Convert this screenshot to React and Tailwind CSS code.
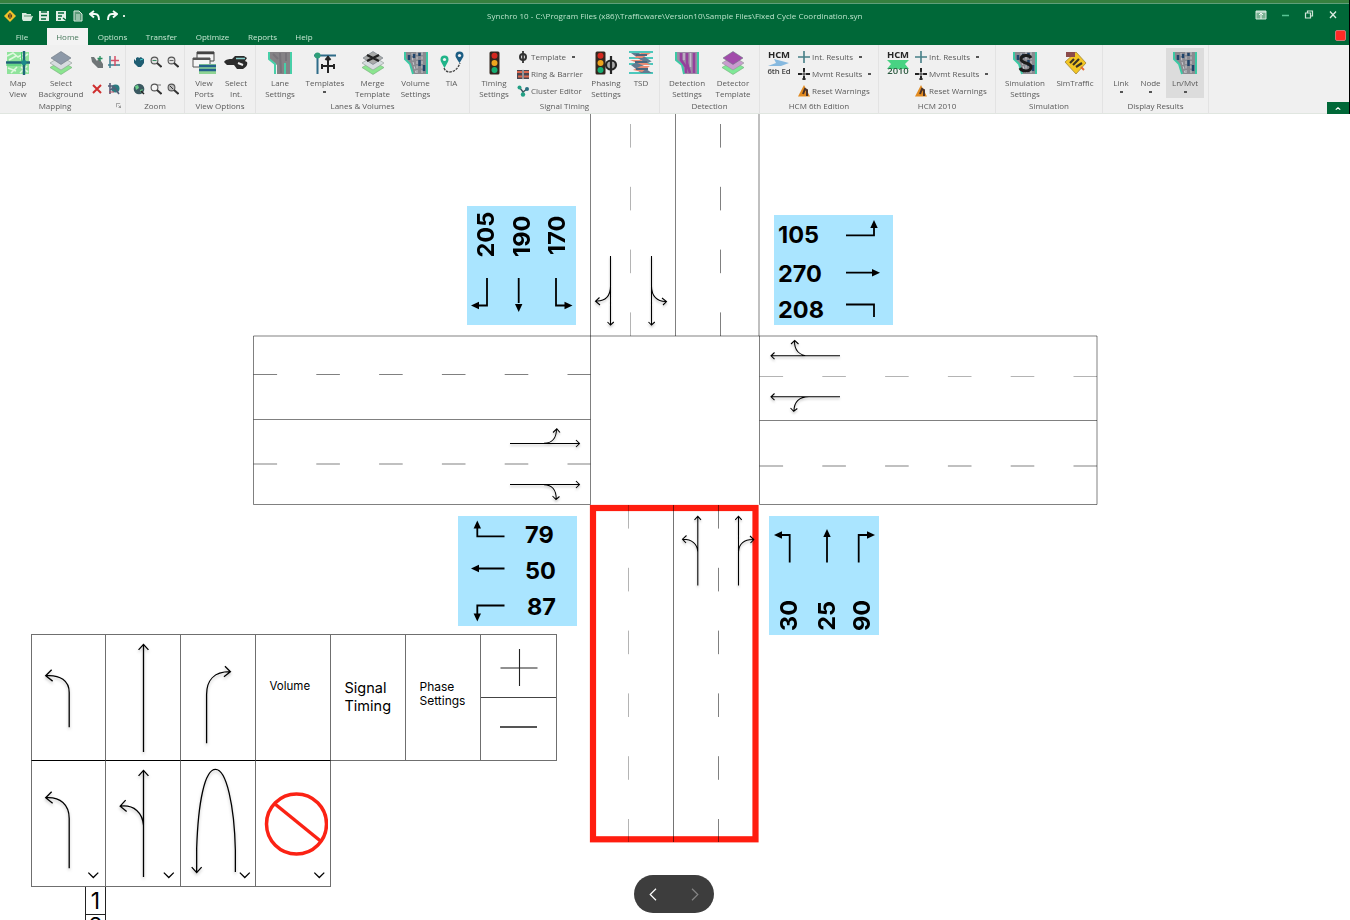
import React from "react";

/* ---------- ribbon icons ---------- */
const Svg = ({ children, box = "0 0 24 24", className = "h-6 w-6" }) => (
  <svg viewBox={box} className={className} fill="none">
    {children}
  </svg>
);

const LanesIcon = ({ a = "#8a8a90", b = "#20456b", children }) => (
  <Svg>
    <path d="M1 1h22v22H9L6 13 1 8z" fill={a} />
    <path d="M1 1v7l5 5 3 10M23 1v22" stroke="#3cc9a4" strokeWidth="2" />
    <path d="M8 2l1 9 3 11M13 1v21M18 1v21" stroke="#c9c9cf" strokeWidth="1" strokeDasharray="3 1.5" />
    <path d="M5 4v5M15.500 9v6M20 14v6M15.500 2v3M10 3v4" stroke={b} strokeWidth="2.500" />
    {children}
  </Svg>
);
const MapIcon = () => (
  <Svg>
    <rect x="1" y="1" width="22" height="22" fill="#8fe39b" />
    <path d="M1 5l6-3 5 4 7-4M3 9l7-4M14 8l8-5M2 17l8 3M5 22l6-6M15 16l7 5M14 22l7-7" stroke="#dff8df" strokeWidth="1.600" />
    <path d="M0 11.500h24M18 0v24" stroke="#1f6678" strokeWidth="2.400" />
    <path d="M0 14h15M15.500 1v9" stroke="#3cc96f" strokeWidth="1" />
    <circle cx="18" cy="11.500" r="2.600" fill="#1b8a8a" />
  </Svg>
);
const LayersIcon = ({ top = "#8d99a8", mid = "#d7dcdf", bottom = "#8be58f", mark = null }) => (
  <Svg>
    <path d="M12 10l11 6.500L12 23.500 1 16.500z" fill={bottom} stroke="#73ab79" strokeWidth=".6" />
    <path d="M12 5l11 7-11 7-11-7z" fill={mid} stroke="#8e9a93" strokeWidth=".6" />
    <path d="M12 0.500l10 6.500-10 6.500L2 7z" fill={top} stroke="#6d7782" strokeWidth=".6" />
    {mark}
  </Svg>
);
const PortsIcon = () => (
  <Svg>
    <path d="M5 1h17v9H5z" fill="#f5f5f5" stroke="#444" />
    <path d="M5 2h17" stroke="#444" strokeWidth="2.500" />
    <path d="M1 7h17v9H1z" fill="#f5f5f5" stroke="#555" />
    <path d="M1 8h17" stroke="#555" strokeWidth="2" />
    <path d="M7 13h17v10H7z" fill="#8fd494" />
    <path d="M7 15h17M7 19h17" stroke="#24608c" strokeWidth="2.400" />
  </Svg>
);
const SelectIntIcon = () => (
  <Svg>
    <path d="M0 11c2-3 5-3 8-3l3-3h9l3 2-2 3 2 1c1 3-1 5-4 7l-6 0-3-4H3z" fill="#2c2c2c" />
    <path d="M12 7.500h9" stroke="#8ad1cf" strokeWidth="1.500" />
    <path d="M14 12l5 2" stroke="#eee" strokeWidth="2" />
  </Svg>
);
const LaneSettingsIcon = () => (
  <Svg>
    <path d="M1 1h22v22H9V14L1 8z" fill="#858286" />
    <path d="M1 1v7l6 5v10M23 1v22M17 12v11" stroke="#48cfa8" strokeWidth="2" />
    <path d="M5 3l5 5M12 2l1 20M18 2v8" stroke="#77747a" strokeWidth="2" />
  </Svg>
);
const TemplatesIcon = () => (
  <Svg>
    <path d="M1 4.500h22M4.500 3v20" stroke="#2f6c89" strokeWidth="2" />
    <circle cx="4.500" cy="4.500" r="3" fill="#2e9e78" />
    <path d="M15 5v17M9 15h12M12.500 9L15 6l2.500 3M9 18v-5M21 18v-5" stroke="#252525" strokeWidth="2" />
  </Svg>
);
const TiaIcon = () => (
  <Svg>
    <path d="M4 17c2 6 12 6 16-5" stroke="#414141" strokeWidth="1.300" strokeDasharray="2.500 1" />
    <path d="M4.500 17C1 11 0.500 10 0.500 8.500a4 4 0 018 0C8.500 10 8 11 4.500 17z" fill="#20b489" />
    <path d="M19.500 12c-3.500-5.500-4-6-4-7.500a4 4 0 018 0c0 1.500-.5 2-4 7.500z" fill="#1c5d83" />
    <circle cx="4.500" cy="8.500" r="1.600" fill="#f1f1f1" />
    <circle cx="19.500" cy="4.500" r="1.600" fill="#f1f1f1" />
  </Svg>
);
const Signal = () => (
  <>
    <rect x="7.500" y=".5" width="10" height="23" rx="1.500" fill="#33261f" />
    <circle cx="12.500" cy="4.800" r="3" fill="#d5281f" />
    <circle cx="12.500" cy="12" r="3" fill="#f0a51e" />
    <circle cx="12.500" cy="19" r="3" fill="#17ad72" />
  </>
);
const TimingIcon = () => <Svg><Signal /></Svg>;
const PhasingIcon = () => (
  <Svg>
    <g transform="translate(-6 0)"><Signal /></g>
    <ellipse cx="17" cy="14" rx="5" ry="4.500" stroke="#252525" strokeWidth="2.200" fill="#aaa" />
    <path d="M17 5v18" stroke="#252525" strokeWidth="2.200" />
  </Svg>
);
const TsdIcon = () => (
  <Svg>
    <path d="M0 1h24M0 7h24M0 13h24M0 22h24" stroke="#4cc8bc" strokeWidth="2" />
    <path d="M2 2h8l12 8H13zM2 14l9-4h12l-10 5zM2 14h9l12 8H12z" fill="#607b91" />
    <path d="M12 2h10l-9 5H5zM1 9h11l10 5h-9zM4 19l8-4h9l-8 6z" fill="#ea8b73" />
    <path d="M7 4h11M6 11h12M7 18h12" stroke="#49677d" strokeWidth="2" />
  </Svg>
);
const DetectionIcon = () => (
  <Svg>
    <path d="M1 1h22v22H9L7 14 1 9z" fill="#9b8ba5" />
    <path d="M1 1v8l6 5 2 9M23 1v22" stroke="#3cc9a4" strokeWidth="2" />
    <path d="M6 2v7l5 7v6M12 2v10l3 10M19 2v20" stroke="#96409c" strokeWidth="2.600" />
    <path d="M9 2v7M15.500 2v14" stroke="#c6b9cc" strokeWidth="1.500" />
  </Svg>
);
const Hcm = ({ lower, green }) => (
  <div className="relative flex h-6 w-6 flex-col items-center justify-between text-[9.5px] leading-[8px] font-bold tracking-[-0.1px] text-[#262626]">
    <svg viewBox="0 0 24 24" className="absolute inset-0 h-6 w-6" fill="none">
      {green ? (
        <path d="M1 9h22l-4 4 4 5H1l4-5z" fill="#48d383" />
      ) : (
        <path d="M7 8l15 4-8 3H1l8-3z" fill="#86b9df" />
      )}
    </svg>
    <span className="relative">HCM</span>
    <span className={green ? "relative font-semibold text-[#2c5a40]" : "relative text-[7.8px] font-semibold text-[#444]"}>{lower}</span>
  </div>
);
const SimTrafficIcon = () => (
  <Svg>
    <path d="M13 1l10 11-10 11L2 11z" fill="#f3c623" stroke="#a08538" strokeWidth=".8" />
    <path d="M3 1h9v5H3z" fill="#8b4b4b" />
    <path d="M7 12l4-4M10 14l6-6M13 16l6-4" stroke="#3b3525" strokeWidth="2.200" />
    <path d="M18 16l3 3" stroke="#e46c35" strokeWidth="2" />
  </Svg>
);

const S = ({ children, className = "h-3 w-3" }) => <svg viewBox="0 0 12 12" className={className} fill="none">{children}</svg>;
const AddLink = () => (
  <S><path d="M0 1h3l3 4 2-3 4 6v4H7L1 6z" fill="#6f7577" /><path d="M9 0v5M6.500 2.500h5" stroke="#28905f" strokeWidth="1.300" /></S>
);
const AddNode = () => (
  <S><path d="M2 0v12M0 9h12" stroke="#3b7f90" strokeWidth="1.500" /><path d="M7 0v10M3 4.500h8" stroke="#d55068" strokeWidth="1.500" /></S>
);
const Delete = () => <S><path d="M2 2l8 8M10 2l-8 8" stroke="#cf2f2f" strokeWidth="2" /></S>;
const NodeGlobe = () => (
  <S><circle cx="7.500" cy="5.500" r="4" fill="#2b7b80" /><path d="M0 3h5M2 0v11M3 7l3-3 5 7" stroke="#555e78" strokeWidth="1.600" /><path d="M1 9h5" stroke="#b74c62" /></S>
);
const Hand = () => <S><path d="M1 3l2 2V2l2-1 1 1 2-1 1 1 2 1v4l-3 4H5L1 7z" fill="#1f5d72" /><path d="M7 4l3-1" stroke="#4cc" /></S>;
const Mag = ({ children, fill = "#e1e1e1" }) => (
  <S><circle cx="4.500" cy="4.500" r="3.400" fill={fill} stroke="#555" strokeWidth="1.100" /><path d="M7 7l4.500 4" stroke="#333" strokeWidth="2" />{children}</S>
);
const Globe = () => <S><circle cx="6" cy="6" r="5.300" fill="#3b5961" /><path d="M2 3l3-1 1 3-3 2zM7 7l3-1-2 4z" fill="#6ccf8b" /><path d="M8 8l3 3" stroke="#222" strokeWidth="1.500" /></S>;
const Phase = () => <S><circle cx="6" cy="6" r="3" stroke="#333" strokeWidth="2" /><path d="M6 0v12" stroke="#333" strokeWidth="1.800" /></S>;
const Ring = () => (
  <S><path d="M0 2h12v9H0z" fill="#4a4650" /><path d="M0 4h5M7 4h5M1 8.500h4M7 8.500h5" stroke="#db684f" strokeWidth="2.200" /><path d="M6 1v11" stroke="#ddd" /></S>
);
const Cluster = () => (
  <S><path d="M3 3l3 4 4-3M6 7v3" stroke="#3a5860" strokeWidth="1.400" /><circle cx="2.500" cy="2.500" r="2" fill="#22a084" /><circle cx="10" cy="4" r="2" fill="#2a6f80" /><circle cx="6" cy="9.500" r="2.200" fill="#22a084" /></S>
);
const IntRes = () => <S><path d="M6 0v12M0 6h12" stroke="#467f87" strokeWidth="1.600" /></S>;
const Mvmt = () => <S><path d="M6 0v4M6 8v4M0 6h4M8 6h4" stroke="#222" strokeWidth="2" /><path d="M6 3v6M3 6h6" stroke="#333" strokeWidth="1" /><path d="M4 11h4" stroke="#333" strokeWidth="1.200" /></S>;
const Warn = () => <S><path d="M6 0l6 11.500H0z" fill="#e28b20" /><path d="M5 9l2-5 2 1v6" stroke="#4c3328" strokeWidth="2" /></S>;

/* ---------- ribbon layout ---------- */
const Big = ({ w, icon, lines, caret, active }) => (
  <div className={`${w} flex shrink-0 flex-col items-center pt-[3px] ${active ? "h-[50px] bg-[#dcdcdc]" : "h-[50px]"}`}>
    <div className="flex h-6 w-6 items-center justify-center">{icon}</div>
    <div className="mt-[3px] flex flex-col items-center text-[8px] leading-[10.5px] whitespace-nowrap">
      {lines.map((l) => (
        <span key={l}>{l}</span>
      ))}
      {caret && <span className="mt-[2px] h-[2px] w-[3px] bg-[#555]" />}
    </div>
  </div>
);
const Row = ({ icon, text, caret }) => (
  <div className="flex h-[17px] items-center gap-[2px] text-[8px] leading-[10px] whitespace-nowrap">
    {icon}
    <span>{text}</span>
    {caret && <span className="ml-[4px] h-[2px] w-[3px] bg-[#555]" />}
  </div>
);
const Group = ({ w, label, pad = "", labelShift = "", children, launcher }) => (
  <div className={`${w} relative flex h-[69px] shrink-0 flex-col border-r border-[#e3e3e3] pt-[3px]`}>
    <div className={`flex h-[50px] ${pad}`}>{children}</div>
    <div className={`flex h-[16px] items-center justify-center text-[8px] leading-[10px] ${labelShift}`}>{label}</div>
    {launcher && (
      <svg viewBox="0 0 6 6" className="absolute right-[4px] bottom-[6px] h-[5px] w-[5px]" fill="none">
        <path d="M.5 5V.5H5M3 3l2.500 2.500M5.500 3v2.500H3" stroke="#777" strokeWidth=".8" />
      </svg>
    )}
  </div>
);

const tabs = [
  ["File", "w-[41px] pr-[9px]"],
  ["Home", "w-[41px]"],
  ["Options", "w-[49px]"],
  ["Transfer", "w-[49px]"],
  ["Optimize", "w-[53px]"],
  ["Reports", "w-[47px]"],
  ["Help", "w-[36px]"],
];

function Header() {
  return (
    <header className="relative h-[114px] w-[1350px] overflow-hidden border-r border-black bg-[#f0f0f0]">
      <div className="h-[114px] blur-[0.6px]">
        <div className="h-[3px] bg-[#37803f]" />
        <div className="h-px bg-[#5f9f7a]" />
        <div className="relative flex h-[24px] items-center bg-[#006838] pl-[4px] text-[#e8f3ec]">
          <div className="flex items-center gap-[5px]">
            <S><path d="M6 0l6 6-6 6-6-6z" fill="#f0c22a" /><path d="M6 3v6M4.500 4.500v3M7.500 4.500v3" stroke="#573d22" strokeWidth="1.200" /></S>
            <S><path d="M1 3h4l1 1h4v2h2l-2 5H2L1 9z" fill="#d9eadf" /><path d="M3 6h8" stroke="#5b9474" /></S>
            <S><path d="M1 1h10v10H1z" fill="#e3efe7" /><path d="M3 2h6M3 5.500h6M3 9h5" stroke="#006838" strokeWidth="1.400" /></S>
            <S><path d="M1 1h10v10H1z" fill="#e3efe7" /><path d="M3 3h6M3 6h4M8 8l4 3M3 9h3" stroke="#006838" strokeWidth="1.400" /></S>
            <S><path d="M2 1h5l3 3v7H2z" fill="#5b9a78" stroke="#d9eadf" /><path d="M4 5h4M4 7h4M4 9h4" stroke="#d9eadf" /></S>
            <S><path d="M5 1L1 4l4 3.500M1 4h5c3 0 4 2 4 6" stroke="#f4faf6" strokeWidth="1.900" /></S>
            <S><path d="M7 1l4 3-4 3.500M11 4H6c-3 0-4 2-4 6" stroke="#f4faf6" strokeWidth="1.900" /></S>
            <span className="h-[2px] w-[2px] bg-[#d5e8dc]" />
          </div>
          <div className="pl-[362px] text-[8px] leading-[10px] tracking-[0.025px] whitespace-nowrap text-[#b9e3ca]">
            Synchro 10 - C:\Program Files (x86)\Trafficware\Version10\Sample Files\Fixed Cycle Coordination.syn
          </div>
          <div className="absolute top-[5px] right-[10px] flex items-center gap-[12px]">
            <S><path d="M1 2h10v8H1z" fill="#79b192" stroke="#cfe4d7" /><path d="M1 3h10M6 4v6M4 6l2-2 2 2" stroke="#eef7f1" /></S>
            <S><path d="M3 6.500h7" stroke="#58c494" strokeWidth="1.500" /></S>
            <S><path d="M2.500 4h5v5h-5zM4.500 4V2h5v5h-2" stroke="#cfe4d7" strokeWidth="1.200" /></S>
            <S><path d="M3 2.500l6 6.500M9 2.500L3 9" stroke="#dcece2" strokeWidth="1.300" /></S>
          </div>
        </div>
        <div className="flex h-[17px] items-end justify-between bg-[#006838] pr-[3px]">
          <nav className="flex h-[17px] items-end pl-[6px] text-[8px] leading-[10px] text-[#c4e6d1]">
            {tabs.map(([t, w]) => (
              <div
                key={t}
                className={`${w} flex h-[17px] items-center justify-center pt-[1px] ${t === "Home" ? "bg-[#f3f3f3] text-[#4a7a5e]" : ""}`}
              >
                {t}
              </div>
            ))}
          </nav>
          <div className="mb-[4px] h-[11px] w-[11px] rounded-[2px] border border-[#c77] bg-[#ff2a25]" />
        </div>
        <div className="flex h-[69px] items-start border-b border-[#e0e6e0] bg-[#f0f0f0] text-[#5a5a5a]">
          <Group w="w-[126px]" label="Mapping" labelShift="pr-[15px]" launcher>
            <Big w="w-[36px]" icon={<MapIcon />} lines={["Map", "View"]} />
            <Big w="w-[50px]" icon={<LayersIcon />} lines={["Select", "Background"]} />
            <div className="grid grid-cols-2 gap-x-[5px] gap-y-[11px] pt-[8px] pl-[5px]">
              <AddLink /><AddNode /><Delete /><NodeGlobe />
            </div>
          </Group>
          <Group w="w-[59px]" label="Zoom">
            <div className="grid grid-cols-3 gap-x-[5px] gap-y-[11px] pt-[8px] pl-[7px]">
              <Hand />
              <Mag><path d="M2.500 4.500h4" stroke="#3a8d63" /></Mag>
              <Mag><path d="M2.500 4.500h4" stroke="#666" /></Mag>
              <Globe />
              <Mag fill="#f5f5f5"><path d="M7 2h4" stroke="#777" /></Mag>
              <Mag fill="#bbb"><path d="M3 3l3 3" stroke="#333" /></Mag>
            </div>
          </Group>
          <Group w="w-[71px]" label="View Options" pad="pl-[2px]">
            <Big w="w-[34px]" icon={<PortsIcon />} lines={["View", "Ports"]} />
            <Big w="w-[30px]" icon={<SelectIntIcon />} lines={["Select", "Int."]} />
          </Group>
          <Group w="w-[214px]" label="Lanes & Volumes" pad="pl-[3px]">
            <Big w="w-[42px]" icon={<LaneSettingsIcon />} lines={["Lane", "Settings"]} />
            <Big w="w-[48px]" icon={<TemplatesIcon />} lines={["Templates"]} caret />
            <Big w="w-[47px]" icon={<LayersIcon top="#a9aaa9" mark={<path d="M6 4l12 6M18 4L6 10" stroke="#222" strokeWidth="2.400" />} />} lines={["Merge", "Template"]} />
            <Big w="w-[39px]" icon={<LanesIcon />} lines={["Volume", "Settings"]} />
            <Big w="w-[33px]" icon={<TiaIcon />} lines={["TIA"]} />
          </Group>
          <Group w="w-[190px]" label="Signal Timing" pad="pl-[5px]">
            <Big w="w-[38px]" icon={<TimingIcon />} lines={["Timing", "Settings"]} />
            <div className="w-[73px] pl-[4px]">
              <Row icon={<Phase />} text="Template" caret />
              <Row icon={<Ring />} text="Ring & Barrier" />
              <Row icon={<Cluster />} text="Cluster Editor" />
            </div>
            <Big w="w-[40px]" icon={<PhasingIcon />} lines={["Phasing", "Settings"]} />
            <Big w="w-[30px]" icon={<TsdIcon />} lines={["TSD"]} />
          </Group>
          <Group w="w-[100px]" label="Detection" pad="pl-[4px]">
            <Big w="w-[46px]" icon={<DetectionIcon />} lines={["Detection", "Settings"]} />
            <Big w="w-[46px]" icon={<LayersIcon top="#a24bab" mid="#c99bcf" bottom="#7fe897" />} lines={["Detector", "Template"]} />
          </Group>
          <Group w="w-[119px]" label="HCM 6th Edition" pad="pl-[7px]">
            <div className="pt-[3px]"><Hcm lower="6th Ed" /></div>
            <div className="pl-[7px]">
              <Row icon={<IntRes />} text="Int. Results" caret />
              <Row icon={<Mvmt />} text="Mvmt Results" caret />
              <Row icon={<Warn />} text="Reset Warnings" />
            </div>
          </Group>
          <Group w="w-[117px]" label="HCM 2010" pad="pl-[7px]">
            <div className="pt-[3px]"><Hcm lower="2010" green /></div>
            <div className="pl-[5px]">
              <Row icon={<IntRes />} text="Int. Results" caret />
              <Row icon={<Mvmt />} text="Mvmt Results" caret />
              <Row icon={<Warn />} text="Reset Warnings" />
            </div>
          </Group>
          <Group w="w-[107px]" label="Simulation" pad="pl-[4px]">
            <Big
              w="w-[50px]"
              icon={<LanesIcon><path d="M18 7c-2-4-10-3-10 1 0 5 10 3 10 8 0 5-9 5-11 1" stroke="#1c1c1c" strokeWidth="3" /></LanesIcon>}
              lines={["Simulation", "Settings"]}
            />
            <Big w="w-[50px]" icon={<SimTrafficIcon />} lines={["SimTraffic"]} />
          </Group>
          <Group w="w-[106px]" label="Display Results" pad="pl-[4px]">
            <Big w="w-[28px]" icon={null} lines={["Link"]} caret />
            <Big w="w-[31px]" icon={null} lines={["Node"]} caret />
            <Big w="w-[38px]" icon={<LanesIcon />} lines={["Ln/Mvt"]} caret active />
          </Group>
          <div className="flex h-[69px] flex-1 items-end justify-end">
            <div className="flex h-[12px] w-[22px] items-center justify-center bg-[#006838]">
              <svg viewBox="0 0 8 4" className="h-[3px] w-[6px]" fill="none"><path d="M1 3.500L4 1l3 2.500" stroke="#fff" strokeWidth="1.600" /></svg>
            </div>
          </div>
        </div>
      </div>
    </header>
  );
}

/* ---------- intersection drawing ---------- */
function Intersection() {
  return (
    <svg viewBox="0 114 1350 806" className="absolute inset-0 h-[806px] w-[1350px]" fill="none">
      <defs>
        <filter id="soft" x="0" y="0" width="1350" height="920" filterUnits="userSpaceOnUse">
          <feDropShadow dx="0" dy="1.8" stdDeviation="1" floodColor="#000" floodOpacity=".25" />
        </filter>
      </defs>
      <rect x="593" y="508" width="162.500" height="331.300" stroke="#ff1d0f" strokeWidth="6.200" />
      <g stroke="#000" strokeWidth=".5">
        <path d="M590.500 114V504.500M675.500 114V336M759 114V336M759.500 336V504.500" />
        <path d="M253.500 336H1097M253.500 504.500H590.500M759.500 504.500H1097M253.500 336V504.500M1097 336V504.500" />
        <path d="M253.500 419.500H590.500M759.500 420.500H1097" />
        <path d="M673.500 505V842" strokeWidth=".55" />
        <g strokeDasharray="23.600 39.200">
          <path d="M720.500 336V114M253.500 374.500H590.500M253.500 464H590.500M759.500 466H1097" />
          <path d="M718.500 505V842" />
          <path d="M630.500 336V114M759.500 376.500H1097M628.500 505V842" strokeWidth=".3" />
        </g>
      </g>
      <g stroke="#000" strokeWidth="1.050" filter="url(#soft)">
        <path d="M610.500 256V325M607.500 322L610.500 325L613.800 322M610.500 286C610.500 296 605.500 301.500 596 301M599.500 297.500L595.500 301.200L600 305" />
        <path d="M651.500 256V325M648.500 322L651.500 325L654.800 322M651.500 286C651.500 296 657 302 666.500 301.500M662 298L666.500 301.600L663 305" />
        <path d="M510 443.500H579.500M576 440L579.500 443.500L576 447M544 443.300C552 443.300 556.500 438 556.500 429M553 432.500L556.800 428.800L560 432.500" />
        <path d="M510 484.500H579.500M576 481L579.500 484.500L576 488M544 484.700C552 484.700 556.500 490 556.200 499.500M552.500 496L556 499.500L559.500 496.500" />
        <path d="M840 355.800H771M774.500 352.500L771 355.800L774.500 359.200M809 355.800C799 355.800 794.200 350 794.500 340.800M791 344L794.700 340.500L798.500 344" />
        <path d="M840 396.800H771M774.500 393.500L771 396.800L774.500 400.200M809 396.800C799 396.800 793.700 402 794 411.500M790.500 408L793.700 411.400L797.300 408.500" />
        <path d="M697.800 585.500V516.500M694.500 519.800L697.800 516.300L701 519.800M697.800 552C697.500 544 692 539 682.500 539.200M686.500 535.500L682.500 539.200L686 543" />
        <path d="M738.500 585.500V516.500M735.200 519.800L738.500 516.300L741.700 519.800M738.500 552C738.700 544 744 539 754 539.500M750 536L753.800 539.600L750.500 543" />
      </g>
    </svg>
  );
}

/* ---------- volume cards ---------- */
const Tip = ({ x, y, r }) => <path d="M0 0L-3.700 8H3.700Z" fill="#000" transform={`translate(${x} ${y}) rotate(${r})`} />;
const Arrows = ({ box, children }) => (
  <svg viewBox={box} className="absolute inset-0 h-full w-full" fill="none" stroke="none">
    {children}
  </svg>
);
const Vert = ({ children, className = "" }) => (
  <span className={`flex rotate-180 items-center justify-start leading-none [writing-mode:vertical-rl] ${className}`}>{children}</span>
);

function Cards() {
  return (
    <div className="font-['Inter',sans-serif] text-[23.5px] font-bold text-black">
      <div className="absolute top-[92px] left-[467px] flex h-[119px] w-[109px] bg-[#aae5ff]">
        <Arrows box="467 206 109 119">
          <path d="M487 278V305.500H478M518.700 278V303M556 278V305.500H565" stroke="#000" strokeWidth="1.800" />
          <Tip x="471" y="305.500" r="-90" /><Tip x="518.700" y="312" r="180" /><Tip x="572.500" y="305.500" r="90" />
        </Arrows>
        <Vert className="h-[51.500px] w-[37px]">205</Vert>
        <Vert className="h-[51px] w-[35px]">190</Vert>
        <Vert className="h-[49px] w-[36px]">170</Vert>
      </div>
      <div className="absolute top-[101px] left-[774px] flex h-[110px] w-[119px] flex-col bg-[#aae5ff] pt-[2px] pl-[4px]">
        <Arrows box="774 215 119 110">
          <path d="M846 235.300H874V227M846 272.700H873M846 304.500H874V317" stroke="#000" strokeWidth="1.800" />
          <Tip x="874" y="220" r="0" /><Tip x="880" y="272.700" r="90" />
        </Arrows>
        <span className="h-[38px] leading-[36px]">105</span>
        <span className="h-[36px] leading-[37px]">270</span>
        <span className="h-[34px] leading-[37px]">208</span>
      </div>
      <div className="absolute top-[402px] left-[458px] flex h-[110px] w-[119px] flex-col bg-[#aae5ff] pt-[2px] pl-[67px]">
        <Arrows box="458 516 119 110">
          <path d="M477.300 528V536.300H504.500M479 568.500H504.500M477.300 614V605.500H504.500" stroke="#000" strokeWidth="1.800" />
          <Tip x="477.300" y="520.500" r="0" /><Tip x="471" y="568.500" r="-90" /><Tip x="477.300" y="621.500" r="180" />
        </Arrows>
        <span className="h-[36px] leading-[34px]">79</span>
        <span className="h-[36px] leading-[33px]">50</span>
        <span className="h-[36px] pl-[2px] leading-[33px]">87</span>
      </div>
      <div className="absolute top-[402px] left-[769px] flex h-[119px] w-[110px] items-end bg-[#aae5ff] pb-[4px]">
        <Arrows box="769 516 110 119">
          <path d="M789.700 562.500V535H782M827 562.500V536M858.700 562.500V535H867" stroke="#000" strokeWidth="1.800" />
          <Tip x="774" y="535" r="-90" /><Tip x="827" y="529" r="0" /><Tip x="875" y="535" r="90" />
        </Arrows>
        <Vert className="w-[40px]">30</Vert>
        <Vert className="w-[36px]">25</Vert>
        <Vert className="w-[34px]">90</Vert>
      </div>
    </div>
  );
}

/* ---------- tool palette ---------- */
const Cell = ({ children, className = "" }) => (
  <div className={`relative border-r border-b border-[#6f6f6f] ${className}`}>{children}</div>
);
const Draw = ({ children, menu }) => (
  <svg viewBox="0 0 75 126" className="h-[125px] w-[75px] overflow-visible" fill="none">
    <g stroke="#000" strokeWidth="1.300" className="drop-shadow-[0_2px_1.5px_rgba(0,0,0,0.25)]">{children}</g>
    {menu && <path d={menu} stroke="#000" strokeWidth="1.300" />}
  </svg>
);

function Palette() {
  return (
    <div className="absolute top-[520px] left-[30.5px] w-[527px] font-['Inter',sans-serif] text-black">
      <div className="grid grid-cols-[75.5px_75px_75px_75px_75px_75px_76px] grid-rows-[127px]">
        <Cell className="border-t border-l border-b-black">
          <Draw><path d="M37.200 93V58C37.200 46 28 40 14 41M19.500 35L13.500 41L20.500 46.500" /></Draw>
        </Cell>
        <Cell className="border-t border-b-black">
          <Draw><path d="M37.500 118V9M32.500 15L37.500 9.500L42.500 15" /></Draw>
        </Cell>
        <Cell className="border-t border-b-black">
          <Draw><path d="M25.500 109V60C25.500 46 33 37 49 37M44 31.500L49.500 37L43 42" /></Draw>
        </Cell>
        <Cell className="border-t border-b-black">
          <div className="pt-[44px] pl-[13.500px] text-[11.5px] leading-[15px]">Volume</div>
        </Cell>
        <Cell className="border-t">
          <div className="pt-[44px] pl-[13.500px] text-[14.5px] leading-[17.5px]">Signal<br />Timing</div>
        </Cell>
        <Cell className="border-t">
          <div className="pt-[44.5px] pl-[13.500px] text-[12px] leading-[14px]">Phase<br />Settings</div>
        </Cell>
        <Cell className="flex flex-col border-t">
          <div className="flex h-[63px] items-center justify-center border-b border-[#444]">
            <svg viewBox="0 0 38 38" className="mt-[3px] h-[38px] w-[38px]" fill="none"><path d="M.5 19H37.500M19.500 0V37" stroke="#222" strokeWidth="1.100" /></svg>
          </div>
          <div className="flex flex-1 justify-center pt-[28px]"><div className="h-[1.500px] w-[37px] bg-[#555]" /></div>
        </Cell>
      </div>
      <div className="grid grid-cols-[75.5px_75px_75px_75px] grid-rows-[126px]">
        <Cell className="border-l">
          <Draw menu="M56.500 112.500L61.500 117.500L66.500 112.500"><path d="M37.200 108V58C37.200 44 28 36 14 37M19.500 31L13.500 37L20.500 42.500" /></Draw>
        </Cell>
        <Cell>
          <Draw menu="M58 112.500L63 117.500L68 112.500"><path d="M37.500 117V9M32.500 15L37.500 9.500L42.500 15M37.500 65C36.500 52 28 44 14.500 45.500M19.500 39.500L14 45.500L20.500 51" /></Draw>
        </Cell>
        <Cell>
          <Draw menu="M59 112.500L64 117.500L69 112.500"><path d="M15.500 112V88C17 42 23.500 8.500 34.500 8.500S53.500 45 54.500 90V112M10.500 107L15.500 112.500L20.500 107" /></Draw>
        </Cell>
        <Cell>
          <Draw menu="M58.500 112.500L63.500 117.500L68.500 112.500" />
          <svg viewBox="0 0 64 64" className="absolute top-[30.5px] left-[8px] h-[64px] w-[64px]" fill="none">
            <circle cx="32.500" cy="32" r="30" stroke="#fb2214" strokeWidth="3.500" />
            <path d="M11 12L56.500 49" stroke="#fb2214" strokeWidth="3.500" />
          </svg>
        </Cell>
      </div>
      <div className="ml-[54.5px] flex h-[33px] w-[21px] flex-col overflow-hidden text-center text-[23px]">
        <div className="h-[28px] shrink-0 border border-t-0 border-[#222] leading-[29px]">1</div>
        <div className="h-[28px] shrink-0 border border-t-0 border-[#222] leading-[22px]">2</div>
      </div>
    </div>
  );
}

export default function App() {
  return (
    <div className="h-[920px] w-[1350px] overflow-hidden bg-white font-['Open_Sans','Noto_Sans',sans-serif]">
      <Header />
      <main className="relative h-[806px] w-[1350px] overflow-hidden">
        <Intersection />
        <Cards />
        <Palette />
        <div className="absolute top-[761px] left-[634px] flex h-[38px] w-[80px] items-center justify-between rounded-full bg-[#3d3d3d] px-[15px]">
          <svg viewBox="0 0 8 13" className="h-[13px] w-[8px]" fill="none"><path d="M7 .8L1.200 6.500L7 12.200" stroke="#fff" strokeWidth="1.200" /></svg>
          <svg viewBox="0 0 8 13" className="h-[13px] w-[8px]" fill="none"><path d="M1 .8L6.800 6.500L1 12.200" stroke="#858585" strokeWidth="1.200" /></svg>
        </div>
      </main>
    </div>
  );
}
